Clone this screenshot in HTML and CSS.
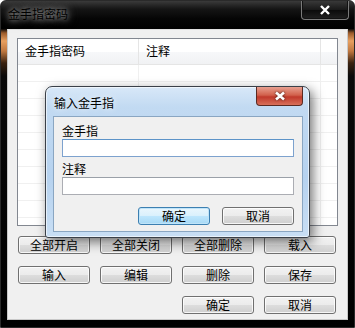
FILE: index.html
```html
<!DOCTYPE html>
<html lang="zh-CN">
<head>
  <meta charset="UTF-8" />
  <title>金手指密码</title>
  <link rel="stylesheet" href="styles.css">
</head>
<body>

  <div class="window">
    <div class="titlebar">
      <span class="title">金手指密码</span>
      <span class="close">
        <svg viewBox="0 0 12 10"><path d="M2 1l8 8M10 1l-8 8"/></svg>
      </span>
    </div>

    <div class="client">
      <div class="list">
        <div class="list-head">
          <div class="col col-code">金手指密码</div>
          <div class="col col-note">注释</div>
          <div class="col col-rest"></div>
        </div>
        <div class="list-rows">
          <div class="row"><div class="cell c1"></div><div class="cell c2"></div><div class="cell c3"></div></div>
          <div class="row"><div class="cell c1"></div><div class="cell c2"></div><div class="cell c3"></div></div>
          <div class="row"><div class="cell c1"></div><div class="cell c2"></div><div class="cell c3"></div></div>
          <div class="row"><div class="cell c1"></div><div class="cell c2"></div><div class="cell c3"></div></div>
          <div class="row"><div class="cell c1"></div><div class="cell c2"></div><div class="cell c3"></div></div>
          <div class="row"><div class="cell c1"></div><div class="cell c2"></div><div class="cell c3"></div></div>
          <div class="row"><div class="cell c1"></div><div class="cell c2"></div><div class="cell c3"></div></div>
          <div class="row"><div class="cell c1"></div><div class="cell c2"></div><div class="cell c3"></div></div>
          <div class="row"><div class="cell c1"></div><div class="cell c2"></div><div class="cell c3"></div></div>
          <div class="row"><div class="cell c1"></div><div class="cell c2"></div><div class="cell c3"></div></div>
        </div>
      </div>

      <div class="buttons">
        <button class="btn">全部开启</button>
        <button class="btn">全部关闭</button>
        <button class="btn">全部删除</button>
        <button class="btn">载入</button>
        <button class="btn">输入</button>
        <button class="btn">编辑</button>
        <button class="btn">删除</button>
        <button class="btn">保存</button>
        <button class="btn col-3">确定</button>
        <button class="btn">取消</button>
      </div>
    </div>

    <!-- диалог поверх окна -->
    <div class="dialog">
      <div class="dialog-title">
        <span>输入金手指</span>
        <span class="dialog-close">
          <svg viewBox="0 0 14 10"><path d="M3 1.5l8 7M11 1.5l-8 7"/></svg>
        </span>
      </div>
      <div class="dialog-body">
        <label class="field-label">金手指</label>
        <div class="input input-focus"></div>
        <label class="field-label">注释</label>
        <div class="input"></div>
        <div class="dialog-buttons">
          <button class="btn btn-default">确定</button>
          <button class="btn">取消</button>
        </div>
      </div>
    </div>
  </div>

</body>
</html>
```

FILE: styles.css
```css
body {
  margin: 0;
  font-family: "Noto Sans CJK SC", "Liberation Sans", sans-serif;
  font-size: 12px;
  background: #fff;
}

.window {
  position: relative;
  width: 355px;
  height: 328px;
  box-sizing: border-box;
  border: 1px solid #2a2a2a;
  border-radius: 6px 6px 0 0;
  background: linear-gradient(180deg, #1c1c1c 0, #0a0a0a 28px, #9a5a2a 32px, #e8a060 40px, #c07840 50px, #3a2210 62px, #0a0a0a 75px, #000 100%);
  overflow: hidden;
}

.titlebar {
  height: 28px;
  display: flex;
  justify-content: space-between;
  align-items: flex-start;
  padding-left: 7px;
  background: linear-gradient(180deg, #3a3a3a 0, #151515 8px, #050505 18px, #000 28px);
}

.title {
  margin-top: 5px;
  color: #000;
  line-height: 16px;
  text-shadow: 0 0 5px #999, 0 0 9px #777, 0 0 12px #666;
}

.close {
  width: 46px;
  height: 19px;
  margin-right: 5px;
  margin-top: -1px;
  border: 1px solid #7a7a7a;
  border-top: none;
  border-radius: 0 0 4px 4px;
  background: linear-gradient(180deg, #3c3c3c 0, #1a1a1a 50%, #0a0a0a 51%, #202020 100%);
  display: flex;
  justify-content: center;
  align-items: center;
  box-shadow: inset 0 0 0 1px #111;
}

.close svg {
  width: 12px;
  height: 10px;
  stroke: #fff;
  stroke-width: 2.4;
  fill: none;
}

.client {
  margin: 0 6px;
  height: 291px;
  box-sizing: border-box;
  padding: 8px 9px 0;
  background: #f0f0f0;
  border: 1px solid #c8c8c8;
  border-top-color: #e0e0e0;
}

.list {
  height: 188px;
  box-sizing: border-box;
  border: 1px solid #828790;
  background: #fff;
  overflow: hidden;
}

.list-head {
  display: flex;
  height: 25px;
  border-bottom: 1px solid #e5e5e5;
  background: linear-gradient(180deg, #fff 0, #fff 50%, #f7f8fa 51%, #f1f2f4 100%);
}

.col {
  box-sizing: border-box;
  padding-left: 7px;
  line-height: 24px;
  font-size: 12px;
  color: #000;
  border-right: 1px solid #e5e5e5;
}

.col-code { width: 121px; }
.col-note { width: 182px; }
.col-rest { flex: 1; border-right: none; }

.row {
  display: flex;
  height: 17px;
  border-bottom: 1px solid #f0f0f0;
  box-sizing: border-box;
}

.cell {
  box-sizing: border-box;
  border-right: 1px solid #f0f0f0;
}

.c1 { width: 121px; }
.c2 { width: 182px; }
.c3 { flex: 1; border-right: none; }

.buttons {
  display: grid;
  grid-template-columns: repeat(4, 72px);
  grid-auto-rows: 18px;
  column-gap: 10px;
  row-gap: 12px;
  margin-top: 10px;
  padding-left: 1px;
}

.col-3 { grid-column: 3; }

.btn {
  font-family: "Noto Sans CJK SC", "Liberation Sans", sans-serif;
  font-size: 12px;
  color: #000;
  padding: 0;
  line-height: 16px;
  border: 1px solid #707070;
  border-radius: 3px;
  background: linear-gradient(180deg, #f2f2f2 0, #ebebeb 50%, #dddddd 51%, #cfcfcf 100%);
  box-shadow: inset 0 0 0 1px rgba(255,255,255,0.8);
}

.btn-default {
  border-color: #3c7fb1;
  background: linear-gradient(180deg, #eaf6fd 0, #d9f0fc 50%, #bee6fd 51%, #a7d9f5 100%);
  box-shadow: inset 0 0 0 1px #bfe4f9;
}

.dialog {
  position: absolute;
  left: 44px;
  top: 85px;
  width: 265px;
  height: 152px;
  box-sizing: border-box;
  border: 1px solid #3a4048;
  border-radius: 7px 7px 3px 3px;
  background: linear-gradient(180deg, #d8e8f8 0, #c2daf2 20px, #b6d2ef 60%, #c8def4 100%);
  box-shadow: 3px 4px 12px rgba(0,0,0,0.55), inset 0 0 0 1px rgba(255,255,255,0.6);
  padding: 0 6px 6px 7px;
}

.dialog-title {
  height: 29px;
  display: flex;
  justify-content: space-between;
  align-items: flex-start;
  padding-left: 1px;
}

.dialog-title span:first-child {
  margin-top: 8px;
  line-height: 16px;
  color: #000;
  text-shadow: 0 0 6px #fff;
}

.dialog-close {
  width: 45px;
  height: 18px;
  border: 1px solid #5a2a22;
  border-top: none;
  border-radius: 0 0 4px 4px;
  background: linear-gradient(180deg, #e8a090 0, #d2614c 45%, #c0392b 55%, #d8705a 100%);
  display: flex;
  justify-content: center;
  align-items: center;
}

.dialog-close svg {
  width: 14px;
  height: 10px;
  fill: none;
  stroke: #fff;
  stroke-width: 2.6;
  filter: drop-shadow(0 0 1px #3a1a14);
}

.dialog-body {
  height: 116px;
  box-sizing: border-box;
  border: 1px solid #8aa6c2;
  background: #f0f0f0;
  padding: 5px 8px 0;
  display: flex;
  flex-direction: column;
}

.field-label {
  line-height: 17px;
  color: #000;
}

.input {
  height: 18px;
  box-sizing: border-box;
  border: 1px solid #abadb3;
  border-top-color: #9aa0a8;
  background: #fff;
  margin-bottom: 3px;
}

.input-focus {
  border-color: #7da2ce;
  border-top-color: #5c93c8;
}

.dialog-buttons {
  display: flex;
  justify-content: flex-end;
  gap: 12px;
  margin-top: 9px;
}

.dialog-buttons .btn {
  width: 72px;
  height: 18px;
}
```
